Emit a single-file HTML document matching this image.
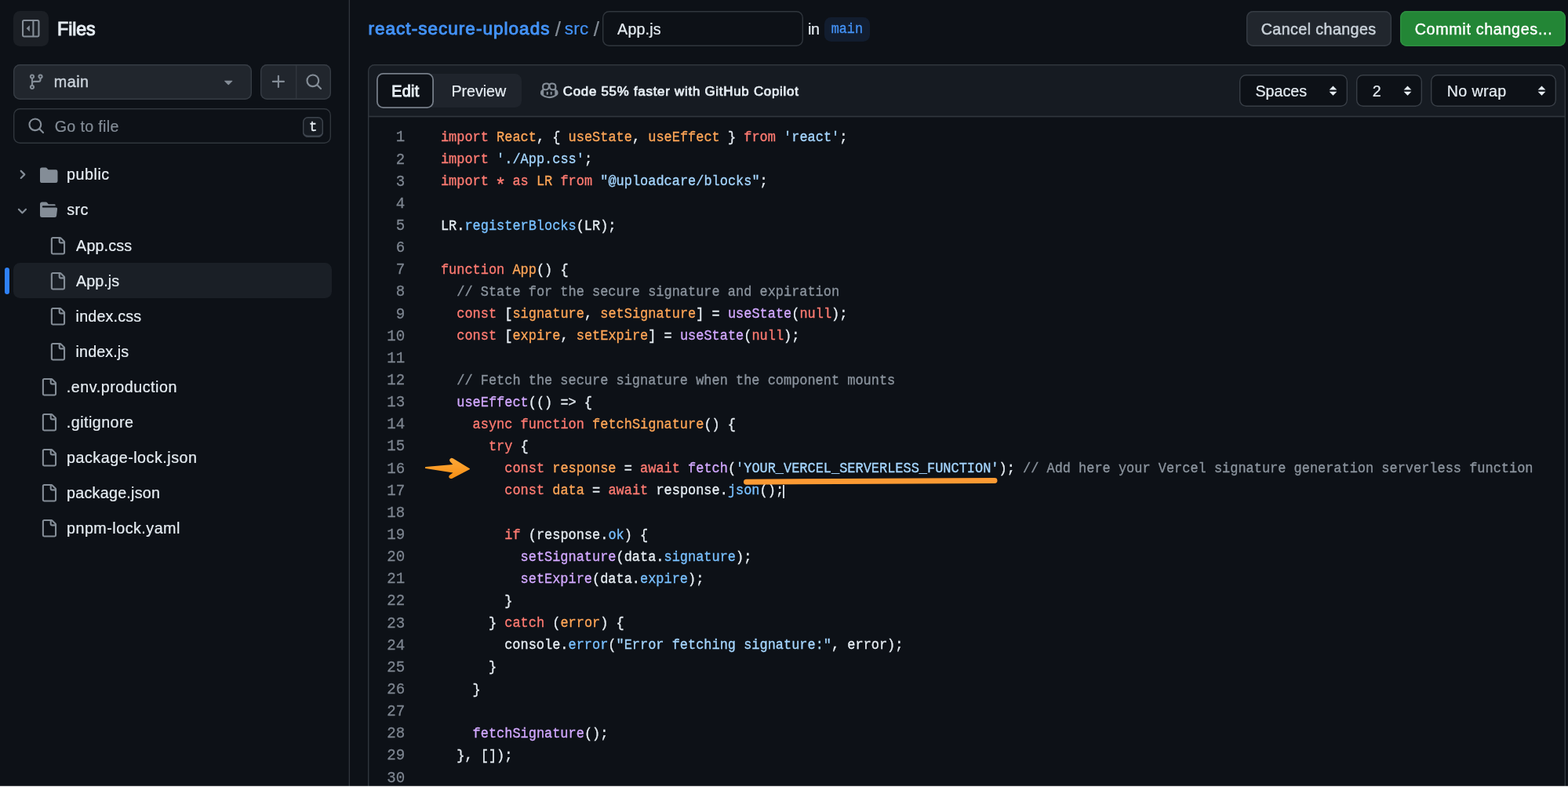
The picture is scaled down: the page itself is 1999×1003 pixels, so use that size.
<!DOCTYPE html>
<html lang="en">
<head>
<meta charset="utf-8">
<title>Editing react-secure-uploads/src/App.js</title>
<style>
*{box-sizing:border-box;margin:0;padding:0}
html,body{width:1999px;height:1003px;overflow:hidden;background:#0d1117}
body{position:relative;font-family:'Liberation Sans',Arial,sans-serif;color:#e6edf3;font-size:19.69px}
#page{position:absolute;left:0;top:0;width:1999px;height:1003px;will-change:transform}
.abs{position:absolute}
.t{position:absolute;white-space:pre;-webkit-text-stroke:0.2px currentColor}
svg{position:absolute;overflow:visible}
#side{position:absolute;left:0;top:0;width:446px;height:1003px;box-shadow:inset -1.3px 0 0 #30363d}
.btn{position:absolute;background:#21262d;box-shadow:inset 0 0 0 1.4px #363c44;border-radius:8.5px}
.kbd{border-radius:6.5px;background:#161b22;box-shadow:inset 0 0 0 1.4px #3d444d,inset 0 -2.6px 0 #3d444d}
#editor,#eborder{position:absolute;left:469px;top:82px;width:1527.4px;height:940px;border-radius:8.5px}
#editor{background:#0d1117;overflow:hidden}
#eborder{box-shadow:inset 0 0 0 1.4px #30363d}
#ehead{position:absolute;left:0;top:0;right:0;height:68px;background:linear-gradient(to bottom,#161b22 0,#161b22 65px,#1e232a 65px,#1e232a 66px,#30363d 66px,#30363d 67px,#181c23 67px,#181c23 68px)}
.sel{position:absolute;top:94.6px;height:41.6px;background:#0d1117;box-shadow:inset 0 0 0 1.4px #383e46;border-radius:8.5px}
pre{font-family:'Liberation Mono','DejaVu Sans Mono',monospace;white-space:pre;position:absolute;transform-origin:0 0}
#nums{left:416px;width:100.1px;text-align:right;color:#7d8590;font-size:19.1px;line-height:26px;top:161.3px;transform:scaleY(1.08231);-webkit-text-stroke:0.25px currentColor}
#lines{left:561.9px;color:#e6edf3;font-size:16.95px;line-height:25px;top:161.0px;transform:scaleY(1.12560);-webkit-text-stroke:0.3px currentColor}
.mono{font-family:'Liberation Mono','DejaVu Sans Mono',monospace;transform-origin:0 0;transform:scaleY(1.13)}
.ast{display:inline-block;transform:translateY(0.26em) scale(1.4,1.3);transform-origin:50% 42%}
.k{color:#ff7b72}.v{color:#ffa657}.s{color:#a5d6ff}.f{color:#d2a8ff}.p{color:#79c0ff}.c{color:#8b949e}
</style>
</head>
<body>
<div id="page">
<div id="side">
<div class="abs" style="left:17px;top:14px;width:45px;height:45px;border-radius:8.5px;background:#1b1f25"></div>
<svg viewBox="0 0 16 16" style="left:28.25px;top:25.25px;width:22.5px;height:22.5px;fill:#848d97"><path d="m4.177 7.823 2.396-2.396A.25.25 0 0 1 7 5.604v4.792a.25.25 0 0 1-.427.177L4.177 8.177a.25.25 0 0 1 0-.354Z"/><path d="M0 1.75C0 .784.784 0 1.75 0h12.5C15.216 0 16 .784 16 1.75v12.5A1.75 1.75 0 0 1 14.25 16H1.75A1.75 1.75 0 0 1 0 14.25Zm1.75-.25a.25.25 0 0 0-.25.25v12.5c0 .138.112.25.25.25H9.5v-13Zm12.5 13a.25.25 0 0 0 .25-.25V1.75a.25.25 0 0 0-.25-.25H11v13Z"/></svg>
<div class="btn" style="left:17px;top:82px;width:304px;height:45px"></div>
<svg viewBox="0 0 16 16" style="left:35.25px;top:93.25px;width:22.5px;height:22.5px;fill:#848d97"><path d="M9.5 3.25a2.25 2.25 0 1 1 3 2.122V6A2.5 2.5 0 0 1 10 8.5H6a1 1 0 0 0-1 1v1.128a2.251 2.251 0 1 1-1.5 0V5.372a2.25 2.25 0 1 1 1.5 0v1.836A2.493 2.493 0 0 1 6 7h4a1 1 0 0 0 1-1v-.628A2.25 2.25 0 0 1 9.5 3.25Zm-6 0a.75.75 0 1 0 1.5 0 .75.75 0 0 0-1.5 0Zm8.25-.75a.75.75 0 1 0 0 1.5.75.75 0 0 0 0-1.5ZM4.25 12a.75.75 0 1 0 0 1.5.75.75 0 0 0 0-1.5Z"/></svg>
<svg viewBox="0 0 16 16" style="left:280.25px;top:93.25px;width:22.5px;height:22.5px;fill:#848d97"><path d="m4.427 7.427 3.396 3.396a.25.25 0 0 0 .354 0l3.396-3.396A.25.25 0 0 0 11.396 7H4.604a.25.25 0 0 0-.177.427Z"/></svg>
<div class="btn" style="left:332px;top:82px;width:90.4px;height:45px"></div>
<div class="abs" style="left:377px;top:83px;width:2px;height:43px;box-shadow:inset 1.4px 0 0 #30363d"></div>
<svg viewBox="0 0 16 16" style="left:343.75px;top:93.25px;width:22.5px;height:22.5px;fill:#848d97"><path d="M7.75 2a.75.75 0 0 1 .75.75V7h4.25a.75.75 0 0 1 0 1.5H8.5v4.25a.75.75 0 0 1-1.5 0V8.5H2.75a.75.75 0 0 1 0-1.5H7V2.75A.75.75 0 0 1 7.75 2Z"/></svg>
<svg viewBox="0 0 16 16" style="left:388.75px;top:93.25px;width:22.5px;height:22.5px;fill:#848d97"><path d="M10.68 11.74a6 6 0 0 1-7.922-8.982 6 6 0 0 1 8.982 7.922l3.04 3.04a.749.749 0 0 1-.326 1.275.749.749 0 0 1-.734-.215ZM11.5 7a4.499 4.499 0 1 0-8.997 0A4.499 4.499 0 0 0 11.5 7Z"/></svg>
<div class="abs" style="left:17px;top:138px;width:405.4px;height:45px;box-shadow:inset 0 0 0 1.4px #30363d;border-radius:8.5px;background:#0d1117"></div>
<svg viewBox="0 0 16 16" style="left:35.25px;top:149.25px;width:22.5px;height:22.5px;fill:#848d97"><path d="M10.68 11.74a6 6 0 0 1-7.922-8.982 6 6 0 0 1 8.982 7.922l3.04 3.04a.749.749 0 0 1-.326 1.275.749.749 0 0 1-.734-.215ZM11.5 7a4.499 4.499 0 1 0-8.997 0A4.499 4.499 0 0 0 11.5 7Z"/></svg>
<div class="abs kbd" style="left:386px;top:149px;width:26px;height:25.5px"></div>
<span class="t mono" style="left:394.2px;top:151px;font-size:16.5px;line-height:19px;color:#e6edf3;-webkit-text-stroke:0.5px #e6edf3">t</span>
<div class="abs" style="left:17px;top:335.2px;width:405.5px;height:45px;border-radius:8.5px;background:#1a1f26"></div>
<div class="abs" style="left:6px;top:340.7px;width:5.6px;height:34px;border-radius:3px;background:#2f81f7"></div>
<svg viewBox="0 0 12 12" style="left:20.16px;top:214.11px;width:16.875px;height:16.875px;fill:#848d97"><path d="M4.7 10c-.2 0-.4-.1-.5-.2-.3-.3-.3-.8 0-1.1L6.9 6 4.2 3.3c-.3-.3-.3-.8 0-1.1.3-.3.8-.3 1.1 0l3.3 3.2c.3.3.3.8 0 1.1L5.3 9.7c-.2.2-.4.3-.6.3Z"/></svg>
<svg viewBox="0 0 16 16" style="left:50.60px;top:211.50px;width:22.5px;height:22.5px;fill:#848d97"><path d="M1.75 1A1.75 1.75 0 0 0 0 2.75v10.5C0 14.216.784 15 1.75 15h12.5A1.75 1.75 0 0 0 16 13.25v-8.5A1.75 1.75 0 0 0 14.25 3H7.5a.25.25 0 0 1-.2-.1l-.9-1.2C6.07 1.26 5.55 1 5 1H1.75Z"/></svg>
<svg viewBox="0 0 12 12" style="left:19.56px;top:259.65px;width:16.875px;height:16.875px;fill:#848d97"><path d="M6 8.825c-.2 0-.4-.1-.5-.2l-3.3-3.3c-.3-.3-.3-.8 0-1.1.3-.3.8-.3 1.1 0l2.7 2.7 2.7-2.7c.3-.3.8-.3 1.1 0 .3.3.3.8 0 1.1l-3.2 3.2c-.2.2-.4.3-.6.3Z"/></svg>
<svg viewBox="0 0 16 16" style="left:50.60px;top:256.34px;width:22.5px;height:22.5px;fill:#848d97"><path d="M.513 1.513A1.75 1.75 0 0 1 1.75 1h3.5c.55 0 1.07.26 1.4.7l.9 1.2a.25.25 0 0 0 .2.1H13a1 1 0 0 1 1 1v.5H2.75a.75.75 0 0 0 0 1.5h11.978a1 1 0 0 1 .994 1.117L15 13.25A1.75 1.75 0 0 1 13.25 15H1.75A1.75 1.75 0 0 1 0 13.25V2.75c0-.464.184-.91.513-1.237Z"/></svg>
<svg viewBox="0 0 16 16" style="left:61.65px;top:301.58px;width:22.5px;height:22.5px;fill:#848d97"><path d="M2 1.75C2 .784 2.784 0 3.75 0h6.586c.464 0 .909.184 1.237.513l2.914 2.914c.329.328.513.773.513 1.237v9.586A1.75 1.75 0 0 1 13.25 16h-9.5A1.75 1.75 0 0 1 2 14.25Zm1.75-.25a.25.25 0 0 0-.25.25v12.5c0 .138.112.25.25.25h9.5a.25.25 0 0 0 .25-.25V6h-2.75A1.75 1.75 0 0 1 9 4.25V1.5Zm6.75.062V4.25c0 .138.112.25.25.25h2.688l-.011-.013-2.914-2.914-.013-.011Z"/></svg>
<svg viewBox="0 0 16 16" style="left:61.65px;top:346.62px;width:22.5px;height:22.5px;fill:#848d97"><path d="M2 1.75C2 .784 2.784 0 3.75 0h6.586c.464 0 .909.184 1.237.513l2.914 2.914c.329.328.513.773.513 1.237v9.586A1.75 1.75 0 0 1 13.25 16h-9.5A1.75 1.75 0 0 1 2 14.25Zm1.75-.25a.25.25 0 0 0-.25.25v12.5c0 .138.112.25.25.25h9.5a.25.25 0 0 0 .25-.25V6h-2.75A1.75 1.75 0 0 1 9 4.25V1.5Zm6.75.062V4.25c0 .138.112.25.25.25h2.688l-.011-.013-2.914-2.914-.013-.011Z"/></svg>
<svg viewBox="0 0 16 16" style="left:61.65px;top:391.66px;width:22.5px;height:22.5px;fill:#848d97"><path d="M2 1.75C2 .784 2.784 0 3.75 0h6.586c.464 0 .909.184 1.237.513l2.914 2.914c.329.328.513.773.513 1.237v9.586A1.75 1.75 0 0 1 13.25 16h-9.5A1.75 1.75 0 0 1 2 14.25Zm1.75-.25a.25.25 0 0 0-.25.25v12.5c0 .138.112.25.25.25h9.5a.25.25 0 0 0 .25-.25V6h-2.75A1.75 1.75 0 0 1 9 4.25V1.5Zm6.75.062V4.25c0 .138.112.25.25.25h2.688l-.011-.013-2.914-2.914-.013-.011Z"/></svg>
<svg viewBox="0 0 16 16" style="left:61.65px;top:436.70px;width:22.5px;height:22.5px;fill:#848d97"><path d="M2 1.75C2 .784 2.784 0 3.75 0h6.586c.464 0 .909.184 1.237.513l2.914 2.914c.329.328.513.773.513 1.237v9.586A1.75 1.75 0 0 1 13.25 16h-9.5A1.75 1.75 0 0 1 2 14.25Zm1.75-.25a.25.25 0 0 0-.25.25v12.5c0 .138.112.25.25.25h9.5a.25.25 0 0 0 .25-.25V6h-2.75A1.75 1.75 0 0 1 9 4.25V1.5Zm6.75.062V4.25c0 .138.112.25.25.25h2.688l-.011-.013-2.914-2.914-.013-.011Z"/></svg>
<svg viewBox="0 0 16 16" style="left:50.75px;top:481.74px;width:22.5px;height:22.5px;fill:#848d97"><path d="M2 1.75C2 .784 2.784 0 3.75 0h6.586c.464 0 .909.184 1.237.513l2.914 2.914c.329.328.513.773.513 1.237v9.586A1.75 1.75 0 0 1 13.25 16h-9.5A1.75 1.75 0 0 1 2 14.25Zm1.75-.25a.25.25 0 0 0-.25.25v12.5c0 .138.112.25.25.25h9.5a.25.25 0 0 0 .25-.25V6h-2.75A1.75 1.75 0 0 1 9 4.25V1.5Zm6.75.062V4.25c0 .138.112.25.25.25h2.688l-.011-.013-2.914-2.914-.013-.011Z"/></svg>
<svg viewBox="0 0 16 16" style="left:50.75px;top:526.78px;width:22.5px;height:22.5px;fill:#848d97"><path d="M2 1.75C2 .784 2.784 0 3.75 0h6.586c.464 0 .909.184 1.237.513l2.914 2.914c.329.328.513.773.513 1.237v9.586A1.75 1.75 0 0 1 13.25 16h-9.5A1.75 1.75 0 0 1 2 14.25Zm1.75-.25a.25.25 0 0 0-.25.25v12.5c0 .138.112.25.25.25h9.5a.25.25 0 0 0 .25-.25V6h-2.75A1.75 1.75 0 0 1 9 4.25V1.5Zm6.75.062V4.25c0 .138.112.25.25.25h2.688l-.011-.013-2.914-2.914-.013-.011Z"/></svg>
<svg viewBox="0 0 16 16" style="left:50.75px;top:571.82px;width:22.5px;height:22.5px;fill:#848d97"><path d="M2 1.75C2 .784 2.784 0 3.75 0h6.586c.464 0 .909.184 1.237.513l2.914 2.914c.329.328.513.773.513 1.237v9.586A1.75 1.75 0 0 1 13.25 16h-9.5A1.75 1.75 0 0 1 2 14.25Zm1.75-.25a.25.25 0 0 0-.25.25v12.5c0 .138.112.25.25.25h9.5a.25.25 0 0 0 .25-.25V6h-2.75A1.75 1.75 0 0 1 9 4.25V1.5Zm6.75.062V4.25c0 .138.112.25.25.25h2.688l-.011-.013-2.914-2.914-.013-.011Z"/></svg>
<svg viewBox="0 0 16 16" style="left:50.75px;top:616.86px;width:22.5px;height:22.5px;fill:#848d97"><path d="M2 1.75C2 .784 2.784 0 3.75 0h6.586c.464 0 .909.184 1.237.513l2.914 2.914c.329.328.513.773.513 1.237v9.586A1.75 1.75 0 0 1 13.25 16h-9.5A1.75 1.75 0 0 1 2 14.25Zm1.75-.25a.25.25 0 0 0-.25.25v12.5c0 .138.112.25.25.25h9.5a.25.25 0 0 0 .25-.25V6h-2.75A1.75 1.75 0 0 1 9 4.25V1.5Zm6.75.062V4.25c0 .138.112.25.25.25h2.688l-.011-.013-2.914-2.914-.013-.011Z"/></svg>
<svg viewBox="0 0 16 16" style="left:50.75px;top:661.90px;width:22.5px;height:22.5px;fill:#848d97"><path d="M2 1.75C2 .784 2.784 0 3.75 0h6.586c.464 0 .909.184 1.237.513l2.914 2.914c.329.328.513.773.513 1.237v9.586A1.75 1.75 0 0 1 13.25 16h-9.5A1.75 1.75 0 0 1 2 14.25Zm1.75-.25a.25.25 0 0 0-.25.25v12.5c0 .138.112.25.25.25h9.5a.25.25 0 0 0 .25-.25V6h-2.75A1.75 1.75 0 0 1 9 4.25V1.5Zm6.75.062V4.25c0 .138.112.25.25.25h2.688l-.011-.013-2.914-2.914-.013-.011Z"/></svg>
<span class="t fit" id="f0" style="left:73.11px;top:26.00px;font-size:23.2px;line-height:23.2px;color:#e6edf3;letter-spacing:-0.092px;-webkit-text-stroke:1.0px currentColor;">Files</span>
<span class="t fit" id="f1" style="left:68.73px;top:95.00px;font-size:19.69px;line-height:19.69px;color:#c9d1d9;letter-spacing:0.545px;-webkit-text-stroke:0.45px currentColor;">main</span>
<span class="t fit" id="f2" style="left:69.73px;top:152.00px;font-size:19.69px;line-height:19.69px;color:#848d97;letter-spacing:0.324px;">Go to file</span>
<span class="t fit" id="f3" style="left:85.01px;top:213.00px;font-size:19.69px;line-height:19.69px;color:#e6edf3;letter-spacing:0.553px;">public</span>
<span class="t fit" id="f4" style="left:85.16px;top:258.00px;font-size:19.69px;line-height:19.69px;color:#e6edf3;letter-spacing:0.474px;">src</span>
<span class="t fit" id="f5" style="left:97.11px;top:304.00px;font-size:19.69px;line-height:19.69px;color:#e6edf3;letter-spacing:0.147px;">App.css</span>
<span class="t fit" id="f6" style="left:97.12px;top:349.00px;font-size:19.69px;line-height:19.69px;color:#e6edf3;letter-spacing:0.033px;">App.js</span>
<span class="t fit" id="f7" style="left:96.60px;top:394.00px;font-size:19.69px;line-height:19.69px;color:#e6edf3;letter-spacing:0.170px;">index.css</span>
<span class="t fit" id="f8" style="left:96.60px;top:439.00px;font-size:19.69px;line-height:19.69px;color:#e6edf3;letter-spacing:0.112px;">index.js</span>
<span class="t fit" id="f9" style="left:84.81px;top:484.00px;font-size:19.69px;line-height:19.69px;color:#e6edf3;letter-spacing:0.528px;">.env.production</span>
<span class="t fit" id="f10" style="left:84.81px;top:529.00px;font-size:19.69px;line-height:19.69px;color:#e6edf3;letter-spacing:0.466px;">.gitignore</span>
<span class="t fit" id="f11" style="left:85.01px;top:574.00px;font-size:19.69px;line-height:19.69px;color:#e6edf3;letter-spacing:0.528px;">package-lock.json</span>
<span class="t fit" id="f12" style="left:85.01px;top:619.00px;font-size:19.69px;line-height:19.69px;color:#e6edf3;letter-spacing:0.275px;">package.json</span>
<span class="t fit" id="f13" style="left:85.01px;top:664.00px;font-size:19.69px;line-height:19.69px;color:#e6edf3;letter-spacing:0.500px;">pnpm-lock.yaml</span>
</div>
<div id="main">
<span class="t fit" id="f14" style="left:469.46px;top:26.00px;font-size:22.5px;line-height:22.5px;color:#4493f8;letter-spacing:1.034px;-webkit-text-stroke:0.95px currentColor;">react-secure-uploads</span>
<span class="t fit" id="f15" style="left:707.80px;top:24.00px;font-size:26px;line-height:26px;color:#848d97;">/</span>
<span class="t fit" id="f16" style="left:719.71px;top:26.00px;font-size:22.5px;line-height:22.5px;color:#4493f8;letter-spacing:0.227px;">src</span>
<span class="t fit" id="f17" style="left:756.69px;top:24.00px;font-size:26px;line-height:26px;color:#848d97;">/</span>
<div class="abs" style="left:768px;top:14px;width:256px;height:45px;box-shadow:inset 0 0 0 1.4px #30363d;border-radius:8.5px;background:#0d1117"></div>
<span class="t fit" id="f18" style="left:787.11px;top:28.00px;font-size:19.69px;line-height:19.69px;color:#e6edf3;letter-spacing:0.144px;">App.js</span>
<span class="t fit" id="f19" style="left:1030.08px;top:28.00px;font-size:19.69px;line-height:19.69px;color:#e6edf3;letter-spacing:-0.360px;">in</span>
<div class="abs" style="left:1051px;top:21.5px;width:57.7px;height:31.3px;border-radius:8.5px;background:#121d2f"></div>
<span class="t mono" style="left:1059.7px;top:26.3px;font-size:16.8px;line-height:20px;color:#4493f8;-webkit-text-stroke:0.3px #4493f8">main</span>
<div class="btn" style="left:1589px;top:14px;width:184.5px;height:45px"></div>
<div class="abs" style="left:1785px;top:14px;width:211.4px;height:45px;border-radius:8.5px;background:#238636;box-shadow:inset 0 0 0 1.4px #2e8f41"></div>
<span class="t fit" id="f20" style="left:1607.71px;top:28.00px;font-size:19.69px;line-height:19.69px;color:#c9d1d9;letter-spacing:0.405px;-webkit-text-stroke:0.5px currentColor;">Cancel changes</span>
<span class="t fit" id="f21" style="left:1803.66px;top:28.00px;font-size:19.69px;line-height:19.69px;color:#ffffff;letter-spacing:0.680px;-webkit-text-stroke:0.38px currentColor;">Commit changes...</span>
<div id="editor">
<div id="ehead"></div>
</div>
<div id="eborder"></div>
<div class="abs" style="left:481px;top:94.4px;width:184px;height:42.2px;border-radius:8.5px;background:#1f242c"></div>
<div class="abs" style="left:480px;top:93px;width:73px;height:45px;border-radius:8.5px;background:#0d1117;box-shadow:inset 0 0 0 1.8px #757d88"></div>
<span class="t fit" id="f22" style="left:499.29px;top:107.00px;font-size:19.69px;line-height:19.69px;color:#e6edf3;letter-spacing:0.301px;-webkit-text-stroke:0.95px currentColor;">Edit</span>
<span class="t fit" id="f23" style="left:575.56px;top:107.00px;font-size:19.69px;line-height:19.69px;color:#e6edf3;letter-spacing:-0.064px;">Preview</span>
<svg viewBox="0 0 16 16" style="left:688.85px;top:104.25px;width:22.5px;height:22.5px;fill:#848d97"><path d="M7.998 15.035c-4.562 0-7.873-2.914-7.998-3.749V9.338c.085-.628.677-1.686 1.588-2.065.013-.07.024-.143.036-.218.029-.183.06-.384.126-.612-.201-.508-.254-1.084-.254-1.656 0-.87.128-1.769.693-2.484.579-.733 1.494-1.124 2.724-1.261 1.206-.134 2.262.034 2.944.765.05.053.096.108.139.165.044-.057.094-.112.143-.165.682-.731 1.738-.899 2.944-.765 1.23.137 2.145.528 2.724 1.261.566.715.693 1.614.693 2.484 0 .572-.053 1.148-.254 1.656.066.228.098.429.126.612.012.076.024.148.037.218.924.385 1.522 1.471 1.591 2.095v1.872c0 .766-3.351 3.795-8.002 3.795Zm0-1.485c2.28 0 4.584-1.11 5.002-1.433V7.862l-.023-.116c-.49.21-1.075.291-1.727.291-1.146 0-2.059-.327-2.71-.991A3.222 3.222 0 0 1 8 6.303a3.24 3.24 0 0 1-.544.743c-.65.664-1.563.991-2.71.991-.652 0-1.236-.081-1.727-.291l-.023.116v4.255c.419.323 2.722 1.433 5.002 1.433ZM6.762 2.83c-.193-.206-.637-.413-1.682-.297-1.019.113-1.479.404-1.713.7-.247.312-.369.789-.369 1.554 0 .793.129 1.171.308 1.371.162.181.519.379 1.442.379.853 0 1.339-.235 1.638-.54.315-.322.527-.827.617-1.553.117-.935-.037-1.395-.241-1.614Zm4.155-.297c-1.044-.116-1.488.091-1.681.297-.204.219-.359.679-.242 1.614.091.726.303 1.231.618 1.553.299.305.784.54 1.638.54.922 0 1.28-.198 1.442-.379.179-.2.308-.578.308-1.371 0-.765-.123-1.242-.37-1.554-.233-.296-.693-.587-1.713-.7Z"/><path d="M6.25 9.037a.75.75 0 0 1 .75.75v1.501a.75.75 0 0 1-1.5 0V9.787a.75.75 0 0 1 .75-.75Zm4.25.75v1.501a.75.75 0 0 1-1.5 0V9.787a.75.75 0 0 1 1.5 0Z"/></svg>
<span class="t fit" id="f24" style="left:717.72px;top:109.00px;font-size:16.875px;line-height:16.875px;color:#e6edf3;letter-spacing:0.754px;-webkit-text-stroke:0.72px currentColor;">Code 55% faster with GitHub Copilot</span>
<div class="sel" style="left:1580.0px;width:137.8px"></div>
<svg viewBox="0 0 8 10" style="left:1693.70px;top:109.1px;width:11px;height:13.2px;fill:#e6edf3"><path d="M4 0.3 7.7 4.1H0.3ZM4 9.7 0.3 5.9H7.7Z"/></svg>
<div class="sel" style="left:1729.2px;width:84.2px"></div>
<svg viewBox="0 0 8 10" style="left:1789.30px;top:109.1px;width:11px;height:13.2px;fill:#e6edf3"><path d="M4 0.3 7.7 4.1H0.3ZM4 9.7 0.3 5.9H7.7Z"/></svg>
<div class="sel" style="left:1824.2px;width:159.6px"></div>
<svg viewBox="0 0 8 10" style="left:1959.70px;top:109.1px;width:11px;height:13.2px;fill:#e6edf3"><path d="M4 0.3 7.7 4.1H0.3ZM4 9.7 0.3 5.9H7.7Z"/></svg>
<span class="t fit" id="f25" style="left:1600.38px;top:107.00px;font-size:19.69px;line-height:19.69px;color:#e6edf3;letter-spacing:0.010px;">Spaces</span>
<span class="t fit" id="f26" style="left:1749.67px;top:107.00px;font-size:19.69px;line-height:19.69px;color:#e6edf3;">2</span>
<span class="t fit" id="f27" style="left:1844.77px;top:107.00px;font-size:19.69px;line-height:19.69px;color:#e6edf3;letter-spacing:0.356px;">No wrap</span>
<pre id="nums">1
2
3
4
5
6
7
8
9
10
11
12
13
14
15
16
17
18
19
20
21
22
23
24
25
26
27
28
29
30</pre>
<pre id="lines"><span class="k">import</span> <span class="v">React</span>, { <span class="v">useState</span>, <span class="v">useEffect</span> } <span class="k">from</span> <span class="s">'react'</span>;
<span class="k">import</span> <span class="s">'./App.css'</span>;
<span class="k">import</span> <span class="k ast">*</span> <span class="k">as</span> <span class="v">LR</span> <span class="k">from</span> <span class="s">"@uploadcare/blocks"</span>;

LR.<span class="p">registerBlocks</span>(LR);

<span class="k">function</span> <span class="v">App</span>() {
  <span class="c">// State for the secure signature and expiration</span>
  <span class="k">const</span> [<span class="v">signature</span>, <span class="v">setSignature</span>] = <span class="f">useState</span>(<span class="k">null</span>);
  <span class="k">const</span> [<span class="v">expire</span>, <span class="v">setExpire</span>] = <span class="f">useState</span>(<span class="k">null</span>);

  <span class="c">// Fetch the secure signature when the component mounts</span>
  <span class="f">useEffect</span>(() =&gt; {
    <span class="k">async</span> <span class="k">function</span> <span class="v">fetchSignature</span>() {
      <span class="k">try</span> {
        <span class="k">const</span> <span class="v">response</span> = <span class="k">await</span> <span class="f">fetch</span>(<span class="s">'YOUR_VERCEL_SERVERLESS_FUNCTION'</span>); <span class="c">// Add here your Vercel signature generation serverless function</span>
        <span class="k">const</span> <span class="v">data</span> = <span class="k">await</span> response.<span class="p">json</span>();

        <span class="k">if</span> (response.<span class="p">ok</span>) {
          <span class="f">setSignature</span>(data.<span class="p">signature</span>);
          <span class="f">setExpire</span>(data.<span class="p">expire</span>);
        }
      } <span class="k">catch</span> (<span class="v">error</span>) {
        console.<span class="p">error</span>(<span class="s">"Error fetching signature:"</span>, error);
      }
    }

    <span class="f">fetchSignature</span>();
  }, []);
</pre>
<svg viewBox="0 0 1999 1003" style="left:0;top:0;width:1999px;height:1003px;pointer-events:none"><defs><linearGradient id="ag" x1="0" y1="0" x2="0" y2="1"><stop offset="0.1" stop-color="#fea636"/><stop offset="0.9" stop-color="#f79117"/></linearGradient></defs><path fill="url(#ag)" d="M542.7 594.9 L577.3 592 L573.8 588.3 C572.4 586.6 573.2 584.4 575 583.9 C576 583.6 577 583.8 578 584.4 L598.5 597 C599.2 597.4 599.2 597.8 598.5 598.2 L577 609.5 C575.4 610.3 573.6 610.2 572.7 608.9 C571.8 607.7 572.3 606.2 573.6 605.2 L577.5 602.4 L542.7 597.1 C541.6 596.8 541.6 595.2 542.7 594.9 Z"/><path d="M951.5 614.2 L1268 612.6" stroke="#fc9a33" stroke-width="7" stroke-linecap="round" fill="none"/></svg>
<div class="abs" style="left:998.3px;top:618px;width:1.4px;height:17px;background:#c9d1d9"></div>
<div class="abs" style="left:0;top:1001px;width:1999px;height:2px;background:linear-gradient(to bottom,rgba(255,255,255,.22) 0,rgba(255,255,255,.22) 1px,#fff 1px,#fff 2px)"></div>
</div>
</div>
</body>
</html>
